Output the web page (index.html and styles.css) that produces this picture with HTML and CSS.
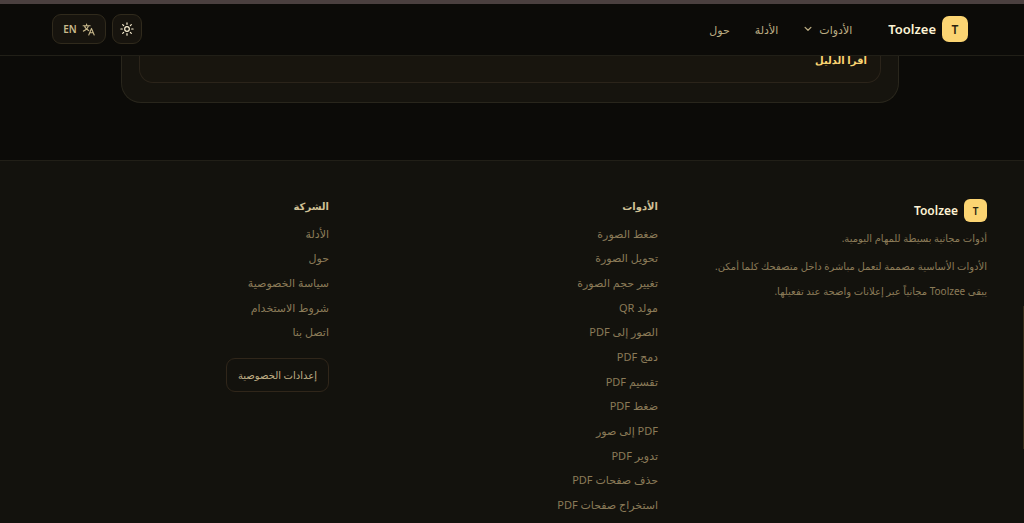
FILE: index.html
```html
<!DOCTYPE html>
<html lang="ar" dir="rtl">
<head>
<meta charset="utf-8">
<meta name="viewport" content="width=device-width, initial-scale=1">
<title>Toolzee</title>
<link rel="stylesheet" href="styles.css">
</head>
<body>
<header class="header">
  <div class="primary">
    <a class="brand" href="#"><span class="mark">T</span><span>Toolzee</span></a>
    <nav class="nav">
      <button class="nav-item" type="button">الأدوات
        <svg class="chevron" viewBox="0 0 24 24" aria-hidden="true"><path d="m5 8 7 7 7-7"/></svg>
      </button>
      <a class="nav-item" href="#">الأدلة</a>
      <a class="nav-item" href="#">حول</a>
    </nav>
  </div>
  <div class="controls">
    <button class="control theme" type="button" aria-label="المظهر">
      <svg class="sun" viewBox="0 0 24 24" aria-hidden="true"><circle cx="12" cy="12" r="4"/><path d="M12 1.5v2.5M12 20v2.500M1.500 12H4M20 12h2.500M4.600 4.600l1.700 1.700M17.700 17.700l1.700 1.700M4.600 19.400l1.700-1.700M17.700 6.300l1.700-1.700"/></svg>
    </button>
    <button class="control language" type="button">
      <svg class="translate" viewBox="0 0 24 24" aria-hidden="true"><path d="M2 5h13M8.500 2v3M4.500 5c1 4.500 4.500 7.500 8 9M12 5c-1 4.500-4.500 8-9.500 10M12.500 22l5-12 5 12M14.200 18h6.600"/></svg>
      <span>EN</span>
    </button>
  </div>
</header>
<main class="main">
  <section class="panel">
    <article class="guide"><a class="guide-link" href="#">اقرأ الدليل</a></article>
  </section>
</main>
<footer class="footer">
  <div class="about">
    <a class="brand brand-small" href="#"><span class="mark">T</span><span>Toolzee</span></a>
    <p class="tagline">أدوات مجانية بسيطة للمهام اليومية.</p>
    <p class="note">الأدوات الأساسية مصممة لتعمل مباشرة داخل متصفحك كلما أمكن.</p>
    <p class="note">يبقى Toolzee مجانياً عبر إعلانات واضحة عند تفعيلها.</p>
  </div>
  <nav class="column">
    <h2 class="title">الأدوات</h2>
    <ul class="links tools">
      <li><a href="#">ضغط الصورة</a></li>
      <li><a href="#">تحويل الصورة</a></li>
      <li><a href="#">تغيير حجم الصورة</a></li>
      <li><a href="#">مولد QR</a></li>
      <li><a href="#">الصور إلى PDF</a></li>
      <li><a href="#">دمج PDF</a></li>
      <li><a href="#">تقسيم PDF</a></li>
      <li><a href="#">ضغط PDF</a></li>
      <li><a href="#">PDF إلى صور</a></li>
      <li><a href="#">تدوير PDF</a></li>
      <li><a href="#">حذف صفحات PDF</a></li>
      <li><a href="#">استخراج صفحات PDF</a></li>
    </ul>
  </nav>
  <nav class="column">
    <h2 class="title">الشركة</h2>
    <ul class="links company">
      <li><a href="#">الأدلة</a></li>
      <li><a href="#">حول</a></li>
      <li><a href="#">سياسة الخصوصية</a></li>
      <li><a href="#">شروط الاستخدام</a></li>
      <li><a href="#">اتصل بنا</a></li>
    </ul>
    <button class="privacy" type="button">إعدادات الخصوصية</button>
  </nav>
</footer>
<div class="scroll-thumb"></div>
</body>
</html>
```
FILE: styles.css
```css
* { box-sizing: border-box; }
body {
  margin: 0;
  height: 100vh;
  overflow: hidden;
  display: flex;
  flex-direction: column;
  background: #0c0b08;
  border-top: 4px solid #4b403f;
  color: #8b7b58;
  font-family: "Noto Sans", "DejaVu Sans", sans-serif;
  font-size: 11px;
}
a { color: inherit; text-decoration: none; }
button { font: inherit; color: inherit; cursor: pointer; }
svg { fill: none; stroke: currentColor; stroke-linecap: round; stroke-linejoin: round; }
.header {
  flex: none;
  display: flex;
  align-items: center;
  justify-content: space-between;
  height: 52px;
  padding: 0 56px 1px 52px;
  border-bottom: 1px solid #211f17;
}
.primary { display: flex; align-items: center; gap: 36px; }
.brand {
  display: flex;
  align-items: center;
  gap: 6px;
  width: fit-content;
  color: #fdf3d5;
  font-size: 13px;
  font-weight: 600;
}
.mark {
  display: grid;
  place-items: center;
  width: 26px;
  height: 26px;
  border-radius: 7px;
  background: #fbd472;
  color: #29220f;
  font-size: 12px;
}
.nav { display: flex; align-items: center; gap: 25px; color: #bcad83; }
.nav-item {
  display: flex;
  align-items: center;
  gap: 6px;
  padding: 0;
  border: 0;
  background: none;
}
.chevron { width: 10px; height: 10px; stroke-width: 3; }
.controls { display: flex; align-items: center; gap: 6px; }
.control {
  display: flex;
  align-items: center;
  justify-content: center;
  gap: 5px;
  height: 30px;
  padding: 0;
  border: 1px solid #302a1c;
  border-radius: 9px;
  background: #17140e;
}
.theme { width: 30px; color: #fdf3d5; }
.language { width: 54px; color: #c9b98c; font-size: 10px; font-weight: 600; }
.sun { width: 14px; height: 14px; stroke-width: 2; }
.translate { width: 13px; height: 13px; stroke-width: 2; }
.main { flex: none; height: 104px; overflow: hidden; padding: 0 125px 0 121px; }
.panel {
  padding: 0 17px 19px;
  border: 1px solid #29261c;
  border-top: 0;
  border-radius: 0 0 20px 20px;
  background: #16140e;
}
.guide {
  height: 27px;
  padding: 0 13px;
  border: 1px solid #2b241a;
  border-top: 0;
  border-radius: 0 0 14px 14px;
  background: #18150e;
}
.guide-link {
  display: block;
  color: #fbd472;
  font-size: 10px;
  font-weight: 700;
  line-height: 8px;
}
.footer {
  flex: 1;
  display: grid;
  grid-template-columns: repeat(3, minmax(0, 1fr));
  gap: 37px;
  padding: 38px 37px 0;
  border-top: 1px solid #211f17;
  background: #13120d;
}
.brand-small { font-size: 12px; }
.brand-small .mark { width: 23px; height: 23px; border-radius: 6px; font-size: 10px; }
.tagline, .note { margin: 0; line-height: 17px; font-size: 10px; white-space: nowrap; }
.tagline { margin: 8px 0 11px; }
.note + .note { margin-top: 8px; }
.title { margin: 0 0 8px; color: #d0c095; font-size: 10px; font-weight: 700; line-height: 14px; }
.links { display: grid; grid-auto-rows: 1fr; align-items: center; margin: 0; padding: 0; list-style: none; }
.tools { height: 296px; }
.company { height: 123px; }
.guide { height: 27px; }
.privacy {
  display: block;
  height: 34px;
  margin-top: 14px;
  padding: 0 11px;
  border: 1px solid #30261a;
  border-radius: 9px;
  background: #13120d;
  color: #c0b086;
  font-size: 10px;
}
.scroll-thumb { position: absolute; top: 306px; right: 0; width: 1px; height: 143px; background: #332b18; }
```
